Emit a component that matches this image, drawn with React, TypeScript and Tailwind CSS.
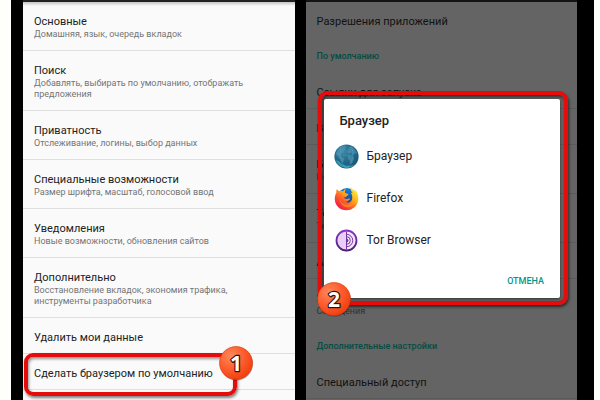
import React from "react";

type Item = { title: string; sub?: string };

const leftItems: Item[] = [
  { title: "Основные", sub: "Домашняя, язык, очередь вкладок" },
  { title: "Поиск", sub: "Добавлять, выбирать по умолчанию, отображать предложения" },
  { title: "Приватность", sub: "Отслеживание, логины, выбор данных" },
  { title: "Специальные возможности", sub: "Размер шрифта, масштаб, голосовой ввод" },
  { title: "Уведомления", sub: "Новые возможности, обновления сайтов" },
  { title: "Дополнительно", sub: "Восстановление вкладок, экономия трафика, инструменты разработчика" },
  { title: "Удалить мои данные" },
];

const defaults: Item[] = [
  { title: "Ввод" },
  { title: "Браузер", sub: "Нет" },
  { title: "Телефон", sub: "Телефон" },
  { title: "Ассистент" },
  { title: "SMS", sub: "Сообщения" },
];

function Row({ item, dim = false, last = false }: { item: Item; dim?: boolean; last?: boolean }) {
  return (
    <button
      type="button"
      className={`block w-full border-b pl-[11px] pr-6 text-left ${item.sub ? "pt-3 pb-[10px]" : "pt-3 pb-2"} ${
        last ? "border-transparent" : dim ? "border-[#5a5a5a]" : "border-[#dfdfdf]"
      }`}
    >
      <span className={`block text-[11px] leading-[15px] ${dim ? "text-[#121212]" : "text-[#222222]"}`}>{item.title}</span>
      {item.sub && (
        <span className={`block text-[9px] leading-[11px] ${dim ? "text-[#303030]" : "text-[#757575]"}`}>{item.sub}</span>
      )}
    </button>
  );
}

function Badge({ n, className }: { n: string; className: string }) {
  return (
    <svg className={`absolute size-9 ${className}`} viewBox="0 0 36 36" role="img" aria-label={n}>
      <defs>
        <radialGradient id={`badge-${n}`} cx="0.35" cy="0.3" r="0.75">
          <stop offset="0" stopColor="#ff8a5c" />
          <stop offset="0.5" stopColor="#fd5f30" />
          <stop offset="1" stopColor="#f23c0c" />
        </radialGradient>
      </defs>
      <circle cx="18.5" cy="19" r="16.5" fill="#000" opacity="0.3" />
      <circle cx="18" cy="18" r="16.5" fill={`url(#badge-${n})`} stroke="#d93a10" strokeWidth="0.6" />
      <text
        x="18"
        y="25.5"
        textAnchor="middle"
        fontFamily="'Noto Sans', sans-serif"
        fontWeight="700"
        fontSize="21"
        fill="#fff"
        stroke="#2a1410"
        strokeWidth="2.4"
        strokeLinejoin="round"
        paintOrder="stroke"
      >
        {n}
      </text>
    </svg>
  );
}

function GlobeIcon() {
  return (
    <svg className="size-[25px]" viewBox="0 0 26 26" aria-hidden="true">
      <defs>
        <radialGradient id="globe" cx="0.4" cy="0.3" r="0.75">
          <stop offset="0" stopColor="#3b86a5" />
          <stop offset="0.65" stopColor="#1d6587" />
          <stop offset="1" stopColor="#165570" />
        </radialGradient>
      </defs>
      <circle cx="13" cy="13" r="12.6" fill="url(#globe)" />
      <path d="M3 7C5 3.500 8 2 11 1.500L13 3 11 4.500 12 6 9.500 7 10 9 7.500 9.500 6.500 12 9 14 11 15 10 18 8 20 7 16 4 13 2 11ZM15 3L19 3 22 6 24 10 22 9 20 11 18 9 15 10 14 7 16 5ZM15 12L19 12 21 15 19 20 17 21 16 17 14 15Z" fill="#69abc2" opacity="0.4" />
      <path d="M2 17C5 25 15 28 22 21C16 24 9 23 5 18Z" fill="#3daec4" opacity="0.75" />
      <path d="M2 9Q13 15 24 9M7 3Q4 14 12 25M18 2Q23 14 14 25" fill="none" stroke="#8ac5d5" strokeWidth="0.4" opacity="0.5" />
    </svg>
  );
}

function FirefoxIcon() {
  return (
    <svg className="size-[25px]" viewBox="0 0 26 26" aria-hidden="true">
      <defs>
        <linearGradient id="fox" x1="0.85" y1="0.05" x2="0.15" y2="0.9">
          <stop offset="0" stopColor="#fff044" />
          <stop offset="0.35" stopColor="#ffb818" />
          <stop offset="0.6" stopColor="#ff6a25" />
          <stop offset="1" stopColor="#ed1648" />
        </linearGradient>
        <linearGradient id="sea" x1="0" y1="0" x2="0" y2="1">
          <stop offset="0" stopColor="#1680d8" />
          <stop offset="1" stopColor="#16358c" />
        </linearGradient>
      </defs>
      <circle cx="13.500" cy="11.500" r="9.500" fill="url(#sea)" />
      <path d="M3 3C3.500 4 4.500 4.800 5.500 5.300C7 4.800 8.500 5 9.500 5.500C10.500 4 11.500 3.500 12.500 3.300C11 5 11 6.500 12 7.500L15 8.200C15 9.500 13 10 12.500 11.500C11.500 11.800 10.500 11.800 10 12.500C11.500 13 12.500 14 14.500 13.200C16 12.600 17 13.200 16.500 14C15 14.500 14.500 16.500 12 16.500C15 18.500 19 17 19 12C19 9 18 7.500 17 7C18.500 7 19 7.500 19.500 8C19 6 16.500 5 17.500 1C18.500 3 20 4 21 5.500C22 4.500 21.800 3.500 21.500 3C24 5.500 25.300 9 25.300 13C25.300 20 19.800 25.300 13 25.300S0.800 20 0.800 13.500C0.800 11 1.500 8.500 2.500 7C2.200 5.500 2.500 4 3 3Z" fill="url(#fox)" />
      <path d="M6 13C7 17 9.500 19.500 14 19.500C18 19.500 20 17 21 14C21.500 19 18 22.500 13.500 22C9 21.800 6 18 6 13Z" fill="#ff9e20" opacity="0.55" />
    </svg>
  );
}

function TorIcon() {
  return (
    <svg className="size-[25px]" viewBox="0 0 26 26" aria-hidden="true">
      <defs>
        <linearGradient id="onion" x1="0" y1="0" x2="0" y2="1">
          <stop offset="0" stopColor="#8a35c4" />
          <stop offset="1" stopColor="#4b1f73" />
        </linearGradient>
      </defs>
      <circle cx="13" cy="13" r="10.400" fill="#e8cef8" stroke="url(#onion)" strokeWidth="1.900" />
      <path d="M13 4A9 9 0 0 1 13 22Z" fill="#f3e6fb" />
      <path d="M13 3.500V22.500M13 6.500A6.500 6.500 0 0 1 13 19.500M13 9A4 4 0 0 1 13 17" fill="none" stroke="#7130a0" strokeWidth="1" />
      <path d="M13 11A2 2 0 0 1 13 15Z" fill="#7130a0" />
    </svg>
  );
}

const browsers = [
  { name: "Браузер", Icon: GlobeIcon },
  { name: "Firefox", Icon: FirefoxIcon },
  { name: "Tor Browser", Icon: TorIcon },
];

export default function App() {
  return (
    <div className="h-screen overflow-hidden bg-[#fefefb] pr-[6px] pl-[11px] font-['Roboto',sans-serif]">
      <main className="flex h-full gap-[11px] bg-black pr-[17px] pl-3">
        <section className="min-w-0 flex-1 bg-[#fafafa]" aria-label="Настройки">
          <div className="h-[2px] bg-[#222222]" />
          <div className="-mb-1 h-1 bg-linear-to-b from-[#c4c4c4] to-[#fafafa]" />
          {leftItems.map((item) => (
            <Row key={item.title} item={item} />
          ))}
          <div className="relative">
            <Row item={{ title: "Сделать браузером по умолчанию" }} />
            <div className="pointer-events-none absolute -top-px left-px h-[43px] w-[213px] rounded-[9px] border-4 border-[#e60c0c] shadow-[1px_2px_3px_rgba(0,0,0,0.5),inset_1px_2px_3px_rgba(0,0,0,0.4)]" />
            <Badge n="1" className="-top-[9px] left-[195px]" />
          </div>
        </section>

        <section className="relative min-w-0 flex-1 overflow-hidden bg-[#646464]" aria-label="Приложения по умолчанию">
          <div className="h-[2px] bg-[#141414]" />
          <Row item={{ title: "Разрешения приложений" }} dim last />
          <h2 className="px-[11px] pt-[10px] pb-[9px] text-[9px] leading-4 font-medium text-[#064c43]">По умолчанию</h2>
          <Row item={{ title: "Ссылки для запуска" }} dim />
          {defaults.map((item, i) => (
            <Row key={item.title} item={item} dim last={i === defaults.length - 1} />
          ))}
          <h2 className="px-[11px] pt-[10px] pb-[9px] text-[9px] leading-4 font-medium text-[#064c43]">Дополнительные настройки</h2>
          <Row item={{ title: "Специальный доступ" }} dim />

          <div className="absolute top-[91px] right-[9px] left-3 rounded-[9px] border-4 border-[#e60c0c] pt-1 pr-1 pb-[3px] pl-[2px] shadow-[1px_2px_3px_rgba(0,0,0,0.6),inset_1px_2px_3px_rgba(0,0,0,0.5)]">
            <div role="dialog" aria-labelledby="dialog-title" className="rounded-[2px] bg-white pb-[9px] shadow-[0_1px_3px_rgba(0,0,0,0.5)]">
              <h1 id="dialog-title" className="px-4 pt-3 pb-1 text-[13px] leading-5 font-medium text-[#222222]">Браузер</h1>
              {browsers.map(({ name, Icon }) => (
                <button key={name} type="button" className="flex h-[42px] w-full items-center gap-2 px-[10px] text-left text-[12px] leading-5 text-[#222222]">
                  <Icon />
                  <span>{name}</span>
                </button>
              ))}
              <div className="flex justify-end px-4 pt-3">
                <button type="button" className="text-[9px] leading-4 font-medium text-[#009688]">ОТМЕНА</button>
              </div>
            </div>
            <Badge n="2" className="-bottom-4 -left-[6px]" />
          </div>
        </section>
      </main>
    </div>
  );
}
